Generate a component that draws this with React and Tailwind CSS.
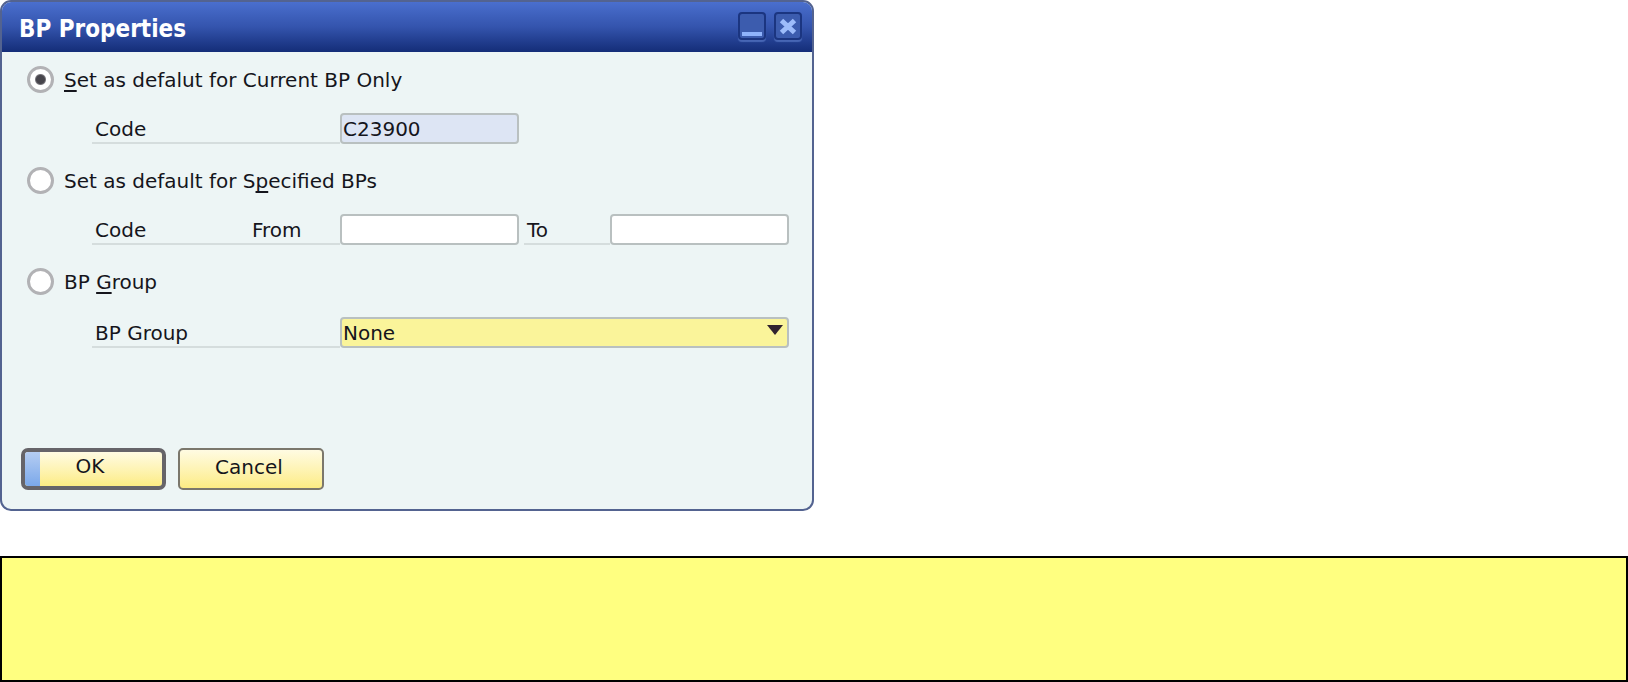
import React from "react";

const inputClass =
  "h-[31px] w-full min-w-0 rounded-[4px] border-2 border-[#b9c0c0] px-px text-xl leading-6 text-[#15151c] outline-none";

function RadioOption({ id, checked, children }) {
  return (
    <div className="flex h-7 items-center gap-2.5">
      <input
        type="radio"
        id={id}
        name="scope"
        defaultChecked={checked}
        className="h-[27px] w-[27px] shrink-0 appearance-none rounded-full border-[3px] border-[#b2b2b5] bg-white checked:bg-[radial-gradient(circle,#47454c_0_4px,#77757b_5px,#ffffff_6px)]"
      />
      <label htmlFor={id} className="pt-0.5 whitespace-nowrap">
        {children}
      </label>
    </div>
  );
}

function Key({ children }) {
  return <span className="underline decoration-2 underline-offset-[3px] [text-decoration-skip-ink:none]">{children}</span>;
}

function FieldRow({ children }) {
  return (
    <div className="grid h-[31px] grid-cols-[248px_1fr_91px_1fr] pl-[65px]">{children}</div>
  );
}

const captionClass = "flex h-[31px] items-center border-b-2 border-[#d5dddd] pt-0.5 pl-[3px]";

export default function App() {
  return (
    <main className="flex flex-col gap-[45px] bg-white font-['DejaVu_Sans',sans-serif] text-xl leading-6 text-[#15151c]">
      <section
        aria-labelledby="dialog-title"
        className="flex w-full max-w-[814px] flex-col overflow-hidden rounded-[11px] border-2 border-[#536390] bg-[#edf5f5]"
      >
        <header className="flex h-[50px] items-center justify-between bg-linear-to-b from-[#4a6fce] via-[#3454ad] to-[#142d78] pr-[10px] pl-[17px]">
          <h1
            id="dialog-title"
            className="pt-1 font-['DejaVu_Sans_Condensed','DejaVu_Sans',sans-serif] text-2xl leading-8 font-bold text-white"
          >
            BP Properties
          </h1>
          <div className="flex gap-2 pb-0.5">
            <button
              type="button"
              aria-label="Minimize"
              className="h-7 w-7 rounded-[4px] border-2 border-[#1b3580] bg-[#3c5cae] shadow-[0_2px_1px_#4766b5]"
            >
              <svg viewBox="0 0 24 24" className="block h-6 w-6">
                <rect x="2" y="18" width="20" height="4" fill="#8fb3fb" />
              </svg>
            </button>
            <button
              type="button"
              aria-label="Close"
              className="h-7 w-7 rounded-[4px] border-2 border-[#1b3580] bg-[#3c5cae] shadow-[0_2px_1px_#4766b5]"
            >
              <svg viewBox="0 0 24 24" className="block h-6 w-6">
                <path d="M5.5 6.5L18.5 18.5M18.5 6.5L5.5 18.5" stroke="#9dbcfa" strokeWidth="5" />
              </svg>
            </button>
          </div>
        </header>

        <form
          className="flex flex-col gap-[22px] pt-[13px] pr-[23px] pb-[19px] pl-[25px]"
          onSubmit={(event) => event.preventDefault()}
        >
          <div className="flex flex-col gap-5">
            <RadioOption id="current" checked>
              <Key>S</Key>et as defalut for Current BP Only
            </RadioOption>
            <FieldRow>
              <label htmlFor="code" className={captionClass}>
                Code
              </label>
              <input id="code" defaultValue="C23900" readOnly className={`${inputClass} bg-[#dde5f4]`} />
            </FieldRow>
          </div>

          <div className="flex flex-col gap-5">
            <RadioOption id="specified">
              Set as default for S<Key>p</Key>ecified BPs
            </RadioOption>
            <FieldRow>
              <div className={captionClass}>
                <span className="w-[157px]">Code</span>
                <label htmlFor="from">From</label>
              </div>
              <input id="from" className={`${inputClass} bg-white`} />
              <label htmlFor="to" className={`${captionClass} ml-[5px]`}>
                To
              </label>
              <input id="to" className={`${inputClass} bg-white`} />
            </FieldRow>
          </div>

          <div className="flex flex-col gap-[22px]">
            <RadioOption id="group">
              BP <Key>G</Key>roup
            </RadioOption>
            <FieldRow>
              <label htmlFor="group-name" className={captionClass}>
                BP Group
              </label>
              <div className="relative col-span-3">
                <select id="group-name" className={`${inputClass} appearance-none bg-[#faf49a] py-0`}>
                  <option>None</option>
                </select>
                <svg
                  viewBox="0 0 16 10"
                  className="pointer-events-none absolute top-2 right-1.5 h-2.5 w-4"
                >
                  <path d="M0 0H16L8 10Z" fill="#30222f" />
                </svg>
              </div>
            </FieldRow>
          </div>

          <div className="-ml-1.5 flex gap-3 pt-[78px]">
            <button
              type="submit"
              className="flex h-[42px] w-[145px] items-stretch overflow-hidden rounded-[7px] border-4 border-[#666469] bg-linear-to-b from-[#fffbe2] to-[#fdec83]"
            >
              <span className="w-[15px] bg-linear-to-b from-[#b5cdf2] to-[#7ba8ea]" />
              <span className="flex-1 pt-0.5 pr-[22px]">OK</span>
            </button>
            <button
              type="button"
              className="h-[42px] w-[146px] rounded-[5px] border-2 border-[#7b776c] bg-linear-to-b from-[#fffbe2] to-[#fdec83] pr-1 pb-1"
            >
              Cancel
            </button>
          </div>
        </form>
      </section>

      <aside aria-label="Note" className="h-[126px] border-2 border-black bg-[#ffff80]" />
    </main>
  );
}
